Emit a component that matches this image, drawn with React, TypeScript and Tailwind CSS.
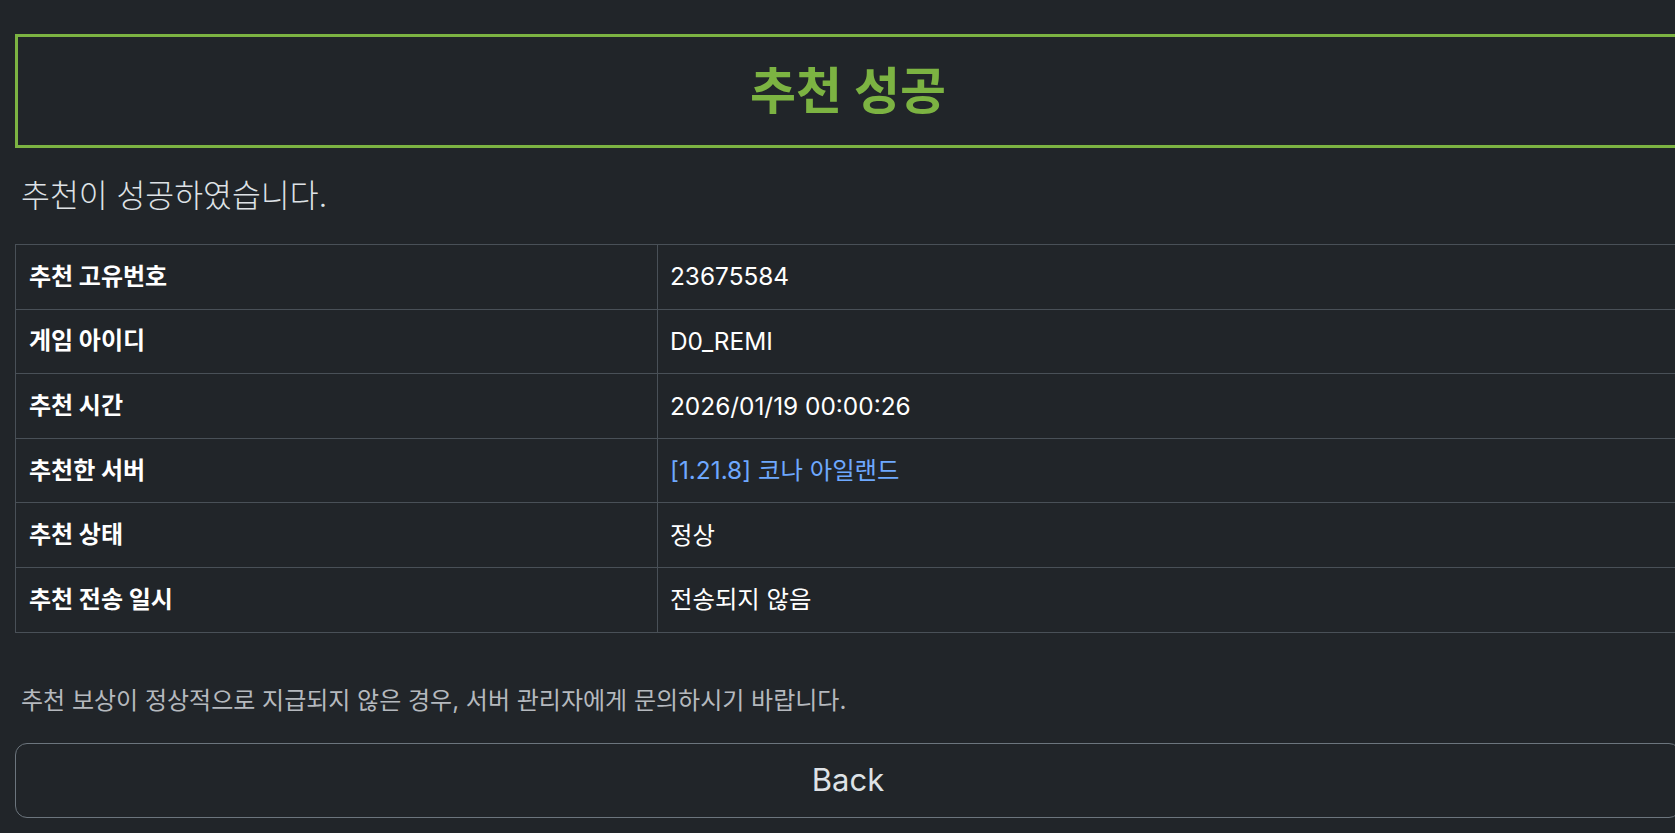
import React from "react";

const rows: { label: string; value: string; link?: boolean }[] = [
  { label: "추천 고유번호", value: "23675584" },
  { label: "게임 아이디", value: "D0_REMI" },
  { label: "추천 시간", value: "2026/01/19 00:00:26" },
  { label: "추천한 서버", value: "[1.21.8] 코나 아일랜드", link: true },
  { label: "추천 상태", value: "정상" },
  { label: "추천 전송 일시", value: "전송되지 않음" },
];

export default function App() {
  return (
    <div
      className="w-screen h-screen overflow-hidden bg-[#212529] text-[#dee2e6]"
      style={{ fontFamily: '"Inter", "Noto Sans CJK KR", sans-serif' }}
    >
      <div className="w-[1666px] ml-[15px] pt-[34px]">
        <div className="h-[114px] border-[3px] border-[#7cb342] flex items-center justify-center">
          <h1 className="text-[50px] font-bold text-[#7cb342] leading-none">
            추천 성공
          </h1>
        </div>

        <p className="mt-[27px] pl-[6px] text-[31.4px] font-light leading-[42px]">
          추천이 성공하였습니다.
        </p>

        <table className="mt-[27px] w-full border-collapse">
          <tbody>
            {rows.map((row) => (
              <tr key={row.label} className="h-[64.6px]">
                <td className="w-[642px] border border-[#495057] px-[13px] text-[24px] font-bold text-white">
                  {row.label}
                </td>
                <td className="border border-[#495057] px-[12px] text-[24.4px] text-white">
                  {row.link ? (
                    <a className="text-[#6ea8fe]">{row.value}</a>
                  ) : (
                    row.value
                  )}
                </td>
              </tr>
            ))}
          </tbody>
        </table>

        <p className="mt-[51px] pl-[6px] text-[24px] leading-[33px] text-[#b5b9be]">
          추천 보상이 정상적으로 지급되지 않은 경우, 서버 관리자에게 문의하시기 바랍니다.
        </p>

        <button className="mt-[26px] w-full h-[75px] rounded-xl border border-[#6c757d] text-[31px] text-[#dee2e6]">
          Back
        </button>
      </div>
    </div>
  );
}
